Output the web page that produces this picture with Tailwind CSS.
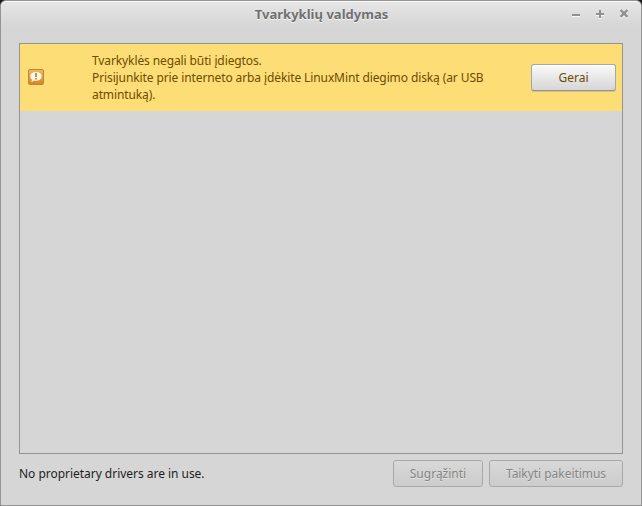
<!DOCTYPE html>
<html lang="lt">
<head>
<meta charset="utf-8">
<title>Tvarkyklių valdymas</title>
<script src="https://cdn.jsdelivr.net/npm/@tailwindcss/browser@4"></script>
</head>
<body class="h-[506px] w-[642px] overflow-hidden bg-[#1c1c1c] font-['Noto_Sans',sans-serif] text-[12px] leading-[17px]">
<div class="flex h-[506px] w-[642px] flex-col rounded-t-[6px] border border-[#949494] bg-[#d6d6d6] bg-[linear-gradient(#e6e6e6,#d6d6d6_26px)] shadow-[inset_0_1px_0_#fafafa]">
  <header class="grid h-[42px] shrink-0 grid-cols-[1fr_auto_1fr] items-start pr-[11px]">
    <span></span>
    <h1 class="pt-[5px] pl-[12px] text-[13px] leading-[17px] font-bold tracking-[0.03px] whitespace-nowrap text-[#707070] [text-shadow:0_1px_0_#f4f4f4]">Tvarkyklių valdymas</h1>
    <div class="flex justify-end gap-[12px] pt-[7px] text-[#8f8f8f]">
      <svg class="size-[12px] drop-shadow-[0_1px_0_#fafafa]" viewBox="0 0 12 12"><path d="M2 6h8v2H2z" fill="currentColor"/></svg>
      <svg class="size-[12px] drop-shadow-[0_1px_0_#fafafa]" viewBox="0 0 12 12"><path d="M5 2h2v3h3v2H7v3H5V7H2V5h3z" fill="currentColor"/></svg>
      <svg class="size-[12px] drop-shadow-[0_1px_0_#fafafa]" viewBox="0 0 12 12"><path d="M2.6 2.1 9.4 8.9M9.4 2.1 2.6 8.9" stroke="currentColor" stroke-width="2.2"/></svg>
    </div>
  </header>
  <main class="mx-[18px] h-[411px] shrink-0 border border-[#949494]">
    <div class="flex h-[67px] items-center bg-[#fddd76] pr-[6px] pl-[8px] text-[#6b4d00]">
      <svg class="mb-[1px] size-[16px] shrink-0" viewBox="0 0 16 16">
        <defs><linearGradient id="o" x2="0" y2="1"><stop stop-color="#f0b956"/><stop offset="1" stop-color="#d8841c"/></linearGradient></defs>
        <rect x=".5" y=".5" width="15" height="15" rx="1.5" fill="url(#o)" stroke="#c3853a"/>
        <path d="M8 3c3.400 0 5.700 1.700 5.700 4.200S11.400 11.700 8 11.700c-.8 0-1.500-.1-2.100-.3-.8.900-1.600 1.300-2.700 1.300.5-.6.7-1.300.7-2C2.900 9.800 2.300 8.600 2.300 7.200 2.300 4.700 4.600 3 8 3z" fill="#f8f7f2"/>
        <path d="M7 4h2v4H7zM7 9h2v1.500H7z" fill="#dc9018"/>
      </svg>
      <p class="ml-[48px] w-[400px] tracking-[-0.107px] whitespace-nowrap">Tvarkyklės negali būti įdiegtos.<br>Prisijunkite prie interneto arba įdėkite LinuxMint diegimo diską (ar USB<br>atmintuką).</p>
      <button class="ml-auto h-[27px] w-[85px] rounded-[3px] border border-[#a7a7a7] border-b-[#929292] bg-linear-to-b from-[#fafafa] to-[#d6d6d6] shadow-[inset_0_1px_0_#fff,0_1px_0_#d7c07c]">Gerai</button>
    </div>
  </main>
  <footer class="mt-[6px] flex h-[27px] shrink-0 items-center gap-[6px] px-[18px] text-[#1e1e1e]">
    <span class="mr-auto tracking-[-0.03px]">No proprietary drivers are in use.</span>
    <button class="h-[27px] w-[90px] rounded-[3px] border border-[#a9a9a9] bg-linear-to-b from-[#d8d8d8] to-[#cccccc] text-[#858585] [text-shadow:0_1px_0_#e2e2e2]">Sugrąžinti</button>
    <button class="h-[27px] w-[134px] rounded-[3px] border border-[#a9a9a9] bg-linear-to-b from-[#d8d8d8] to-[#cccccc] tracking-[-0.04px] text-[#858585] [text-shadow:0_1px_0_#e2e2e2]">Taikyti pakeitimus</button>
  </footer>
</div>
</body>
</html>
